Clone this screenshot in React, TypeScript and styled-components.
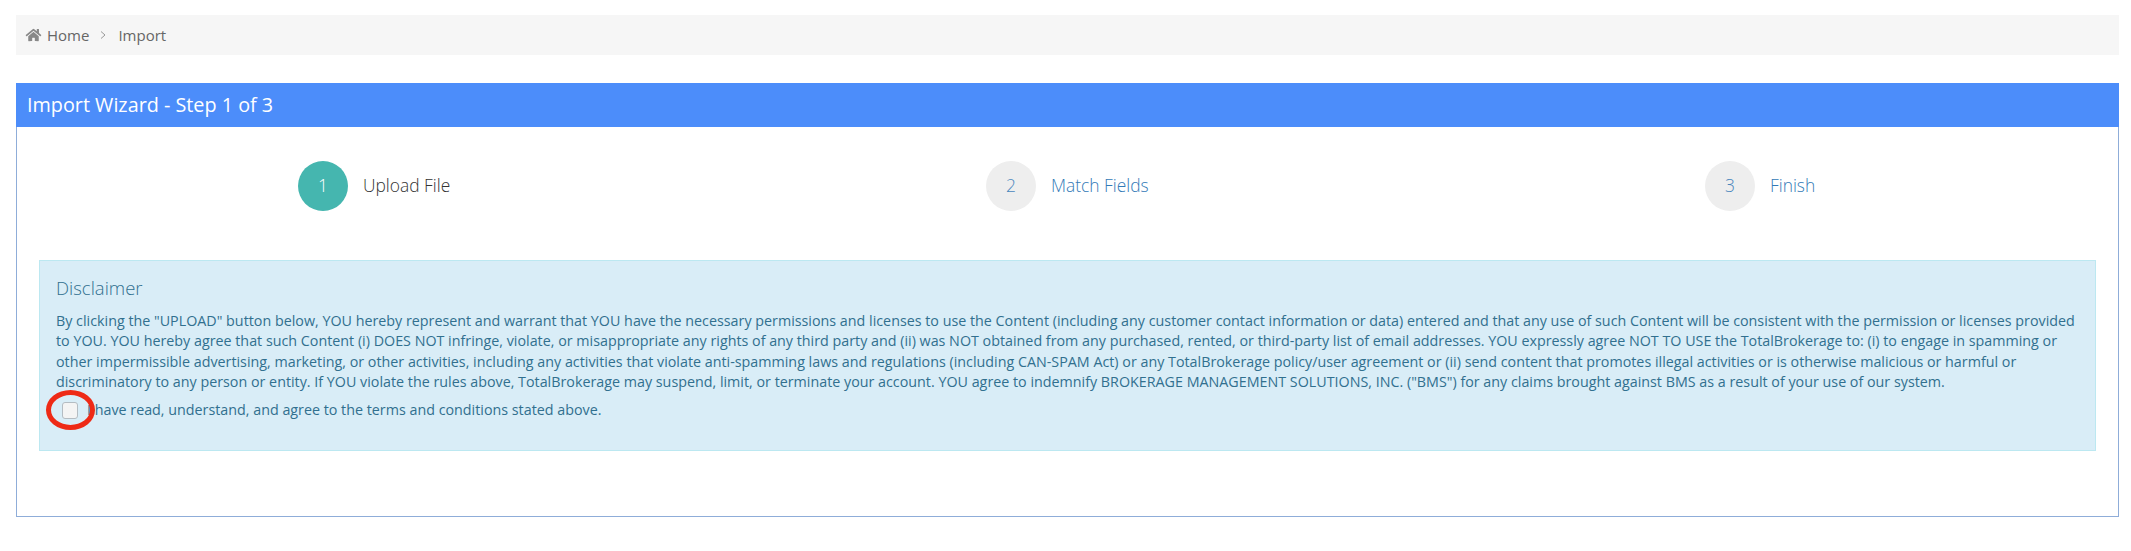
import React from 'react';
import styled, { createGlobalStyle } from 'styled-components';
import { FaHome } from 'react-icons/fa';

const GlobalStyle = createGlobalStyle`
  html, body {
    margin: 0;
    padding: 0;
    background: #fff;
    font-family: "Open Sans", "Liberation Sans", sans-serif;
  }
`;

const Page = styled.div`
  box-sizing: border-box;
  height: 551px;
  padding: 15px 12px 0 16px;
  overflow: hidden;
`;

const Breadcrumb = styled.nav`
  display: flex;
  align-items: center;
  height: 40px;
  padding: 0 9px;
  background: #f6f6f6;
  color: #666;
  font-size: 15px;
`;

const HomeIcon = styled(FaHome)`
  width: 17px;
  height: 14px;
  color: #888;
  margin-right: 5px;
`;

const Separator = styled.svg`
  width: 6px;
  height: 8px;
  margin: 0 12px 0 11px;
  fill: none;
  stroke: #999;
  stroke-width: 1;
`;

const Panel = styled.section`
  box-sizing: border-box;
  height: 434px;
  margin-top: 28px;
  border: 1px solid #8fadd9;
  border-top: 0;
`;

const PanelHeader = styled.h2`
  box-sizing: border-box;
  height: 44px;
  margin: 0 -1px;
  padding: 0 11px;
  background: #4c8dfa;
  color: #fff;
  font-size: 19.8px;
  font-weight: 400;
  line-height: 44px;
`;

const Steps = styled.div`
  display: grid;
  grid-template-columns: 688px 719px auto;
  padding: 34px 0 0 281px;
`;

const Step = styled.div`
  display: flex;
  align-items: center;
  gap: 15px;
`;

const StepNumber = styled.span<{ $active?: boolean }>`
  display: flex;
  align-items: center;
  justify-content: center;
  width: 50px;
  height: 50px;
  padding-bottom: 2px;
  box-sizing: border-box;
  border-radius: 50%;
  background: ${p => (p.$active ? '#45b6af' : '#eeeeee')};
  color: ${p => (p.$active ? '#fff' : '#4a86bd')};
  font-size: 17.4px;
  font-weight: 300;
`;

const StepLabel = styled.span<{ $active?: boolean }>`
  margin-top: -2px;
  color: ${p => (p.$active ? '#333' : '#337ab7')};
  font-size: 17.4px;
  font-weight: 300;
`;

const Disclaimer = styled.div`
  box-sizing: border-box;
  height: 191px;
  margin: 49px 22px 0 22px;
  padding: 15px 16px;
  background: #d9edf7;
  border: 1px solid #bce8f1;
  color: #31708f;
`;

const DisclaimerTitle = styled.h4`
  margin: 0 0 11px;
  font-size: 18.5px;
  font-weight: 300;
  line-height: 24px;
`;

const DisclaimerText = styled.p`
  margin: 0;
  font-size: 14.3px;
  line-height: 20.3px;
`;

const AgreeRow = styled.label`
  position: relative;
  display: flex;
  align-items: center;
  gap: 9px;
  margin-top: 8px;
  padding-left: 6px;
  font-size: 14.3px;
  line-height: 20px;
`;

const Checkbox = styled.span`
  box-sizing: border-box;
  width: 16px;
  height: 17px;
  background: #f4f4f4;
  border: 1px solid #b4bcc2;
  border-radius: 3px;
`;

const Annotation = styled.span`
  position: absolute;
  left: -10px;
  top: -10px;
  box-sizing: border-box;
  width: 49px;
  height: 40px;
  border: 5px solid #ee2a16;
  border-radius: 50%;
`;

const App: React.FC = () => (
  <Page>
    <GlobalStyle />
    <Breadcrumb>
      <HomeIcon />
      Home
      <Separator viewBox="0 0 6 8">
        <polyline points="1,0.5 5,4 1,7.5" />
      </Separator>
      Import
    </Breadcrumb>
    <Panel>
      <PanelHeader>Import Wizard - Step 1 of 3</PanelHeader>
      <Steps>
        <Step>
          <StepNumber $active>1</StepNumber>
          <StepLabel $active>Upload File</StepLabel>
        </Step>
        <Step>
          <StepNumber>2</StepNumber>
          <StepLabel>Match Fields</StepLabel>
        </Step>
        <Step>
          <StepNumber>3</StepNumber>
          <StepLabel>Finish</StepLabel>
        </Step>
      </Steps>
      <Disclaimer>
        <DisclaimerTitle>Disclaimer</DisclaimerTitle>
        <DisclaimerText>
          By clicking the "UPLOAD" button below, YOU hereby represent and warrant that YOU have the necessary permissions and licenses to use the Content (including any customer contact information or data) entered and that any use of such Content will be consistent with the permission or licenses provided to YOU. YOU hereby agree that such Content (i) DOES NOT infringe, violate, or misappropriate any rights of any third party and (ii) was NOT obtained from any purchased, rented, or third-party list of email addresses. YOU expressly agree NOT TO USE the TotalBrokerage to: (i) to engage in spamming or other impermissible advertising, marketing, or other activities, including any activities that violate anti-spamming laws and regulations (including CAN-SPAM Act) or any TotalBrokerage policy/user agreement or (ii) send content that promotes illegal activities or is otherwise malicious or harmful or discriminatory to any person or entity. If YOU violate the rules above, TotalBrokerage may suspend, limit, or terminate your account. YOU agree to indemnify BROKERAGE MANAGEMENT SOLUTIONS, INC. ("BMS") for any claims brought against BMS as a result of your use of our system.
        </DisclaimerText>
        <AgreeRow>
          <Checkbox />
          I have read, understand, and agree to the terms and conditions stated above.
          <Annotation />
        </AgreeRow>
      </Disclaimer>
    </Panel>
  </Page>
);

export default App;
